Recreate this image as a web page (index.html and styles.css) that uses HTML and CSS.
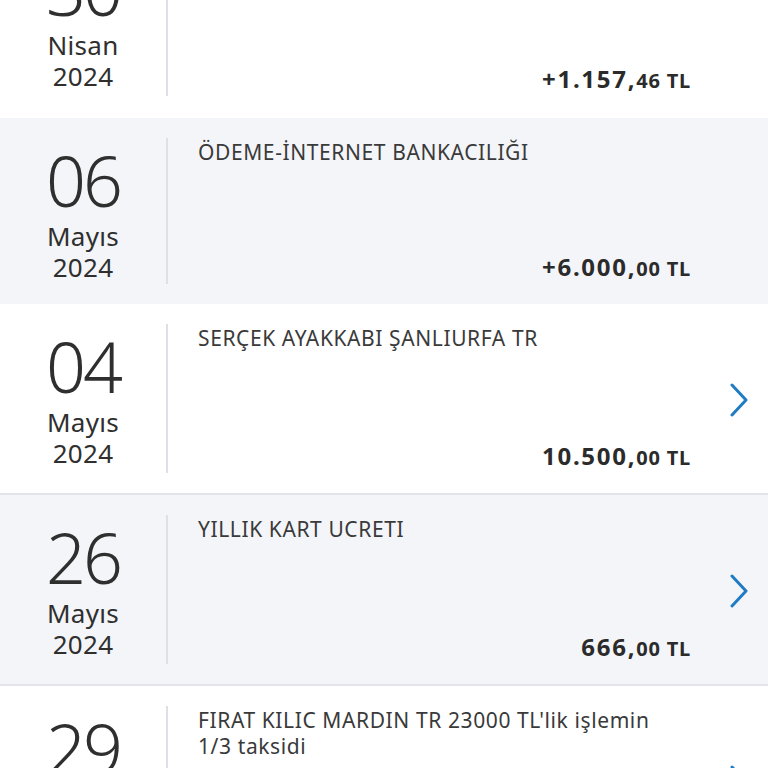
FILE: index.html
```html
<!DOCTYPE html>
<html lang="tr">
<head>
<meta charset="utf-8">
<title>Hesap Hareketleri</title>
<link rel="stylesheet" href="styles.css">
</head>
<body>
<div class="list">
  <div class="row first">
    <div class="date"><div class="day">30</div><div class="month">Nisan</div><div class="year">2024</div></div>
    <div class="info"><div class="title"></div><div class="amount">+1.157,<span class="cents">46 TL</span></div></div>
    <div class="arrow"></div>
  </div>
  <div class="row gray second">
    <div class="date"><div class="day">06</div><div class="month">Mayıs</div><div class="year">2024</div></div>
    <div class="info"><div class="title">ÖDEME-İNTERNET BANKACILIĞI</div><div class="amount">+6.000,<span class="cents">00 TL</span></div></div>
    <div class="arrow"></div>
  </div>
  <div class="row">
    <div class="date"><div class="day">04</div><div class="month">Mayıs</div><div class="year">2024</div></div>
    <div class="info"><div class="title">SERÇEK AYAKKABI ŞANLIURFA TR</div><div class="amount">10.500,<span class="cents">00 TL</span></div></div>
    <div class="arrow"><svg class="chev" viewBox="0 0 20 34" width="20" height="34"><polyline points="3,2 17,17 3,32" fill="none" stroke="#1f7cc4" stroke-width="3" stroke-linecap="round" stroke-linejoin="round"/></svg></div>
  </div>
  <div class="row gray">
    <div class="date"><div class="day">26</div><div class="month">Mayıs</div><div class="year">2024</div></div>
    <div class="info"><div class="title">YILLIK KART UCRETI</div><div class="amount">666,<span class="cents">00 TL</span></div></div>
    <div class="arrow"><svg class="chev" viewBox="0 0 20 34" width="20" height="34"><polyline points="3,2 17,17 3,32" fill="none" stroke="#1f7cc4" stroke-width="3" stroke-linecap="round" stroke-linejoin="round"/></svg></div>
  </div>
  <div class="row">
    <div class="date"><div class="day">29</div><div class="month">Mayıs</div><div class="year">2024</div></div>
    <div class="info"><div class="title">FIRAT KILIC MARDIN TR 23000 TL'lik işlemin 1/3 taksidi</div><div class="amount">7.666,<span class="cents">67 TL</span></div></div>
    <div class="arrow"><svg class="chev" viewBox="0 0 20 34" width="20" height="34"><polyline points="3,2 17,17 3,32" fill="none" stroke="#1f7cc4" stroke-width="3" stroke-linecap="round" stroke-linejoin="round"/></svg></div>
  </div>
</div>
</body>
</html>
```

FILE: styles.css
```css
html, body {
  margin: 0;
  padding: 0;
  background: #ffffff;
  font-family: "Noto Sans", "Open Sans", sans-serif;
  color: #333333;
}

body {
  width: 768px;
  height: 768px;
  overflow: hidden;
}

.list {
  margin-top: -73px;
}

.row {
  display: grid;
  grid-template-columns: 168px 1fr 77px;
  height: 189px;
  box-sizing: content-box;
  border-bottom: 2px solid #e3e4ea;
  background: #ffffff;
  padding: 0;
}

.row.first {
  border-bottom-color: #ffffff;
}

.row.gray {
  background: #f4f5f9;
}

.row.second {
  height: 186px;
  border-bottom: 0;
}

.date {
  margin: 20px 0;
  border-right: 2px solid #dfe0e5;
  display: flex;
  flex-direction: column;
  align-items: center;
  padding-top: 7px;
  color: #2f2f2f;
}

.day {
  font-size: 70px;
  line-height: 70px;
  font-weight: 300;
  letter-spacing: -3px;
  margin-bottom: 6px;
}

.month,
.year {
  font-size: 26px;
  line-height: 31px;
  font-weight: 400;
  letter-spacing: 0.3px;
}

.info {
  margin: 20px 0;
  padding-left: 30px;
  display: flex;
  flex-direction: column;
  justify-content: space-between;
  min-width: 0;
}

.title {
  margin-top: 1px;
  max-width: 462px;
  font-size: 21px;
  line-height: 26px;
  color: #3a3a3a;
  letter-spacing: 0.6px;
}

.amount {
  align-self: flex-end;
  margin-bottom: 2px;
  font-size: 24px;
  line-height: 26px;
  font-weight: 700;
  color: #2b2b2b;
  letter-spacing: 1.7px;
}

.cents {
  font-size: 20px;
  letter-spacing: 0.8px;
}

.arrow {
  display: flex;
  align-items: center;
  padding-left: 38px;
}

.chev {
  display: block;
  margin-top: 2px;
}
```
